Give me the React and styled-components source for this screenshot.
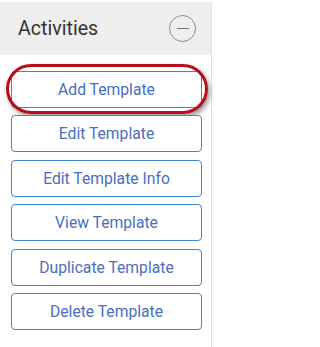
import React from "react";
import styled, { createGlobalStyle } from "styled-components";

const Global = createGlobalStyle`
  html, body { margin: 0; padding: 0; background: #fff; }
  body { font-family: Roboto, "Liberation Sans", sans-serif; }
`;

const Panel = styled.div`
  width: 212px;
  margin-top: 2px;
  border-right: 1px solid #e2e2e2;
  min-height: 345px;
  box-sizing: border-box;
`;

const Header = styled.div`
  height: 53px;
  background: #eeeeee;
  display: flex;
  align-items: center;
  justify-content: space-between;
  padding: 0 15px 0 18px;
  box-sizing: border-box;
`;

const Title = styled.h2`
  margin: 0;
  font-family: Roboto, "Liberation Sans", sans-serif;
  font-weight: 400;
  font-size: 19.6px;
  color: #333333;
`;

const Toggle = styled.button`
  width: 27px;
  height: 27px;
  border-radius: 50%;
  border: 1px solid #8a8a8a;
  background: transparent;
  padding: 0;
  display: flex;
  align-items: center;
  justify-content: center;
  cursor: pointer;
  &::after {
    content: "";
    width: 12px;
    height: 1px;
    background: #777;
  }
`;

const List = styled.div`
  display: flex;
  flex-direction: column;
  gap: 7.5px;
  padding: 15.5px 9px 0 11px;
`;

const Item = styled.div`
  position: relative;
`;

const ActionButton = styled.button`
  width: 100%;
  height: 37px;
  box-sizing: border-box;
  border: 1px solid #3f86cf;
  border-radius: 4px;
  background: #fff;
  color: #4b6ec0;
  font-family: Roboto, "Liberation Sans", sans-serif;
  font-size: 15.7px;
  cursor: pointer;
`;

const Highlight = styled.div`
  position: absolute;
  left: -5px;
  top: -7px;
  width: 202px;
  height: 50px;
  box-sizing: border-box;
  border: 3px solid #b80d17;
  border-radius: 25px;
  box-shadow: 2px 3px 5px rgba(0, 0, 0, 0.4);
  pointer-events: none;
`;

const actions = [
  "Add Template",
  "Edit Template",
  "Edit Template Info",
  "View Template",
  "Duplicate Template",
  "Delete Template",
];

export default function App() {
  return (
    <>
      <Global />
      <Panel>
        <Header>
          <Title>Activities</Title>
          <Toggle aria-label="Collapse" />
        </Header>
        <List>
          {actions.map((a, i) => (
            <Item key={a}>
              <ActionButton>{a}</ActionButton>
              {i === 0 && <Highlight />}
            </Item>
          ))}
        </List>
      </Panel>
    </>
  );
}
